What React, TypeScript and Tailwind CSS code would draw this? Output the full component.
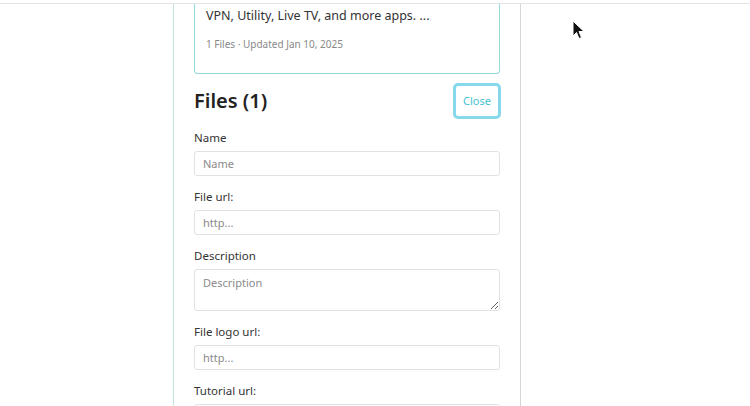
import React from "react"

type Field = {
  label: string
  placeholder: string
  multiline?: boolean
}

const fields: Field[] = [
  { label: "Name", placeholder: "Name" },
  { label: "File url:", placeholder: "http..." },
  { label: "Description", placeholder: "Description", multiline: true },
  { label: "File logo url:", placeholder: "http..." },
  { label: "Tutorial url:", placeholder: "http..." },
]

function Cursor() {
  return (
    <svg width="14" height="20" viewBox="0 0 14 20" className="absolute left-[572px] top-[20px]">
      <path d="M1 1 L1 16 L4.5 12.5 L7 18.5 L9.5 17.5 L7 11.5 L12 11.5 Z" fill="#111" stroke="#fff" strokeWidth="1" />
    </svg>
  )
}

export default function App() {
  return (
    <div
      className="relative h-[406px] w-[750px] overflow-hidden bg-white"
      style={{ fontFamily: '"Noto Sans", "Open Sans", sans-serif' }}
    >
      <div className="h-[4px] border-b border-[#e4e4e4]" />
      <div className="ml-[173px] flex h-[402px] w-[348px] flex-col border-l border-r border-l-[#c4e2df] border-r-[#d6d6d6] pl-[20px] pr-[20px]">
        <div className="rounded-b-[4px] border border-t-0 border-[#93d8da] px-[11px] pt-[2px] pb-[21px]">
          <p className="text-[12.5px] leading-[20px] text-[#333]">VPN, Utility, Live TV, and more apps. ...</p>
          <p className="mt-[10px] text-[10px] leading-[16px] text-[#888]">1 Files · Updated Jan 10, 2025</p>
        </div>

        <div className="mt-[9px] flex items-center justify-between">
          <h2 className="text-[20px] font-semibold leading-[36px] text-[#222]">Files (1)</h2>
          <button className="mr-[-1px] h-[36px] w-[48px] rounded-[5px] border-[3px] border-[#86d9ec] text-[11px] text-[#45bfd3]">
            Close
          </button>
        </div>

        <div className="mt-[10px] flex flex-col gap-[12px]">
          {fields.map((f) => (
            <div key={f.label} className="flex flex-col gap-[4px]">
              <label className="text-[11.5px] leading-[18px] text-[#333]">{f.label}</label>
              {f.multiline ? (
                <textarea
                  placeholder={f.placeholder}
                  className="h-[42px] w-full resize-y rounded-[3px] border border-[#e2e2e2] px-[8px] pt-[5px] pb-[3px] text-[11px] leading-[16px] placeholder:text-[#8a8a8a] outline-none"
                />
              ) : (
                <input
                  placeholder={f.placeholder}
                  className="h-[25px] w-full rounded-[3px] border border-[#e2e2e2] px-[8px] text-[11px] placeholder:text-[#8a8a8a] outline-none"
                />
              )}
            </div>
          ))}
        </div>
      </div>
      <Cursor />
    </div>
  )
}
